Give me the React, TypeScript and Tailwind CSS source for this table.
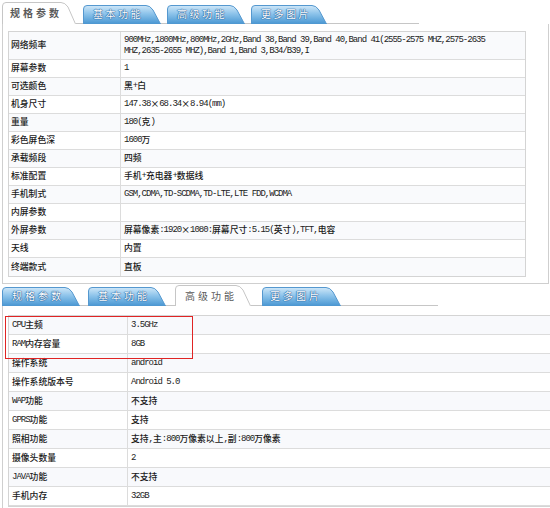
import React from "react";

const CJK_RE = /[\u2E80-\u9FFF\uFF00-\uFFEF\u3000-\u303F\u00D7]/;
const SPLIT_RE = /[\u2E80-\u9FFF\uFF00-\uFFEF\u3000-\u303F\u00D7]+|[^\u2E80-\u9FFF\uFF00-\uFFEF\u3000-\u303F\u00D7]+/g;

function Txt({ s }: { s: string }) {
  const parts = s.match(SPLIT_RE) || [];
  return (
    <>
      {parts.map((p, i) =>
        CJK_RE.test(p) ? (
          <span key={i} className="font-['Noto_Sans_CJK_SC',sans-serif] text-[8.8px] font-medium text-[#1a1a1a]">
            {p}
          </span>
        ) : (
          <span key={i} className="font-['Liberation_Mono',monospace] text-[9px] tracking-[-1px] whitespace-pre text-[#222]">
            {p}
          </span>
        )
      )}
    </>
  );
}

function Tab({
  label,
  active,
  w,
  h,
  id,
  cls,
  textCls,
}: {
  label: string;
  active?: boolean;
  w: number;
  h: number;
  id: string;
  cls: string;
  textCls: string;
}) {
  const d = active
    ? `M0.5 ${h} L0.5 4 Q0.5 0.5 4 0.5 L${w - 15} 0.5 Q${w - 11} 0.5 ${w - 8} 5 L${w - 0.5} ${h}`
    : `M0.5 ${h} L0.5 4 Q0.5 0.5 4 0.5 L${w - 15} 0.5 Q${w - 11} 0.5 ${w - 8} 5 L${w - 0.5} ${h} Z`;
  return (
    <div className={`relative shrink-0 ${cls}`}>
      <svg className="absolute inset-0" width={w} height={h} viewBox={`0 0 ${w} ${h}`}>
        <defs>
          <linearGradient id={id} x1="0" y1="0" x2="0" y2="1">
            <stop offset="0" stopColor="#cfe7f8" />
            <stop offset="0.45" stopColor="#8cc3ea" />
            <stop offset="1" stopColor="#4896d2" />
          </linearGradient>
        </defs>
        <path
          d={d}
          fill={active ? "#ffffff" : `url(#${id})`}
          stroke={active ? "#c6c6c6" : "#5598cf"}
          strokeWidth="1"
        />
      </svg>
      <div
        className={`relative flex h-full items-center font-['Noto_Sans_CJK_SC',sans-serif] ${textCls} ${
          active
            ? "text-[#5a5a5a]"
            : "text-white [text-shadow:0_0_1px_#1d5a98,0_0_1px_#1d5a98,0_0_1px_#1d5a98]"
        }`}
      >
        {label}
      </div>
    </div>
  );
}

type Row = { k: string; v: string | string[] };

const topRows: Row[] = [
  {
    k: "网络频率",
    v: [
      "900MHz,1800MHz,800MHz,2GHz,Band 38,Band 39,Band 40,Band 41(2555-2575 MHZ,2575-2635",
      "MHZ,2635-2655 MHZ),Band 1,Band 3,B34/B39,I",
    ],
  },
  { k: "屏幕参数", v: "1" },
  { k: "可选颜色", v: "黑+白" },
  { k: "机身尺寸", v: "147.38×68.34×8.94(mm)" },
  { k: "重量", v: "180(克)" },
  { k: "彩色屏色深", v: "1600万" },
  { k: "承载频段", v: "四频" },
  { k: "标准配置", v: "手机+充电器+数据线" },
  { k: "手机制式", v: "GSM,CDMA,TD-SCDMA,TD-LTE,LTE FDD,WCDMA" },
  { k: "内屏参数", v: "" },
  { k: "外屏参数", v: "屏幕像素:1920×1080:屏幕尺寸:5.15(英寸),TFT,电容" },
  { k: "天线", v: "内置" },
  { k: "终端款式", v: "直板" },
];

const bottomRows: Row[] = [
  { k: "CPU主频", v: "3.5GHz" },
  { k: "RAM内存容量", v: "8GB" },
  { k: "操作系统", v: "android" },
  { k: "操作系统版本号", v: "Android 5.0" },
  { k: "WAP功能", v: "不支持" },
  { k: "GPRS功能", v: "支持" },
  { k: "照相功能", v: "支持,主:800万像素以上,副:800万像素" },
  { k: "摄像头数量", v: "2" },
  { k: "JAVA功能", v: "不支持" },
  { k: "手机内存", v: "32GB" },
];

export default function App() {
  return (
    <div className="relative h-[508px] w-[550px] overflow-hidden bg-white text-[#222] leading-none">
      {/* Top image */}
      <div className="flex h-[284px] flex-col">
        <div className="flex h-[24px] items-end pl-[2px]">
          <Tab id="t1" active label="规格参数" w={74} h={22} cls="w-[74px] h-[22px]" textCls="pl-[8px] text-[10px] font-bold tracking-[3px]" />
          <div className="h-full w-[7px] shrink-0 border-b border-[#c6c6c6]" />
          <Tab id="t2" label="基本功能" w={78} h={19} cls="w-[78px] h-[19px] border-b border-[#c6c6c6]" textCls="pl-[10px] text-[10px] tracking-[2.5px]" />
          <div className="h-full w-[6px] shrink-0 border-b border-[#c6c6c6]" />
          <Tab id="t3" label="高级功能" w={78} h={19} cls="w-[78px] h-[19px] border-b border-[#c6c6c6]" textCls="pl-[10px] text-[10px] tracking-[2.5px]" />
          <div className="h-full w-[6px] shrink-0 border-b border-[#c6c6c6]" />
          <Tab id="t4" label="更多图片" w={76} h={19} cls="w-[76px] h-[19px] border-b border-[#c6c6c6]" textCls="pl-[10px] text-[10px] tracking-[2.5px]" />
          <div className="h-full w-[92px] shrink-0 border-b border-[#c6c6c6]" />
        </div>
        <div className="ml-[2px] h-[260px] w-[547px] border-x border-b border-[#cfcfcf] pl-[5px] pt-[7px]">
          <div className="w-[518px] border border-[#d4d4d4]">
            {topRows.map((r, i) => (
              <div
                key={r.k}
                className={`flex border-b border-[#dcdcdc] last:border-b-0 ${i === 0 ? "h-[28px]" : "h-[18px]"} ${
                  i % 2 === 0 ? "bg-[#f9fafc]" : "bg-white"
                }`}
              >
                <div className="flex w-[112px] shrink-0 items-center border-r border-[#dcdcdc] pl-[2px]">
                  <Txt s={r.k} />
                </div>
                <div className="flex flex-col justify-center pl-[3px]">
                  {Array.isArray(r.v) ? (
                    r.v.map((line, j) => (
                      <div key={j} className="flex h-[11px] items-center">
                        <Txt s={line} />
                      </div>
                    ))
                  ) : (
                    <div className="flex items-center">
                      <Txt s={r.v} />
                    </div>
                  )}
                </div>
              </div>
            ))}
          </div>
        </div>
      </div>

      {/* Bottom image */}
      <div className="flex flex-col">
        <div className="flex h-[22px] items-end pl-[2px]">
          <Tab id="b1" label="规格参数" w={78} h={19} cls="w-[78px] h-[19px] border-b border-[#c6c6c6]" textCls="pl-[10px] text-[10px] tracking-[3px]" />
          <div className="h-full w-[8px] shrink-0 border-b border-[#c6c6c6]" />
          <Tab id="b2" label="基本功能" w={78} h={19} cls="w-[78px] h-[19px] border-b border-[#c6c6c6]" textCls="pl-[10px] text-[10px] tracking-[3px]" />
          <div className="h-full w-[9px] shrink-0 border-b border-[#c6c6c6]" />
          <Tab id="b3" active label="高级功能" w={76} h={21} cls="w-[76px] h-[21px]" textCls="pl-[10px] text-[10px] tracking-[3px]" />
          <div className="h-full w-[11px] shrink-0 border-b border-[#c6c6c6]" />
          <Tab id="b4" label="更多图片" w={79} h={19} cls="w-[79px] h-[19px] border-b border-[#c6c6c6]" textCls="pl-[8px] text-[10px] tracking-[3px]" />
          <div className="h-full w-[97px] shrink-0 border-b border-[#c6c6c6]" />
        </div>
        <div className="ml-[2px] h-[210px] border-l border-[#cfcfcf] pl-[5px] pt-[9px]">
          <div className="w-[560px] border-y border-l border-[#d4d4d4]">
            {bottomRows.map((r, i) => (
              <div
                key={r.k}
                className={`flex h-[19px] border-b border-[#dcdcdc] ${i % 2 === 0 ? "bg-[#f8f9fc]" : "bg-white"}`}
              >
                <div className="flex w-[119px] shrink-0 items-center border-r border-[#dcdcdc] pl-[3px]">
                  <Txt s={r.k} />
                </div>
                <div className="flex items-center pl-[3px]">
                  <Txt s={r.v} />
                </div>
              </div>
            ))}
          </div>
        </div>
      </div>

      {/* red highlight annotation */}
      <div className="absolute left-[5px] top-[316px] h-[43px] w-[188px] border border-[#e02424]" />
    </div>
  );
}
